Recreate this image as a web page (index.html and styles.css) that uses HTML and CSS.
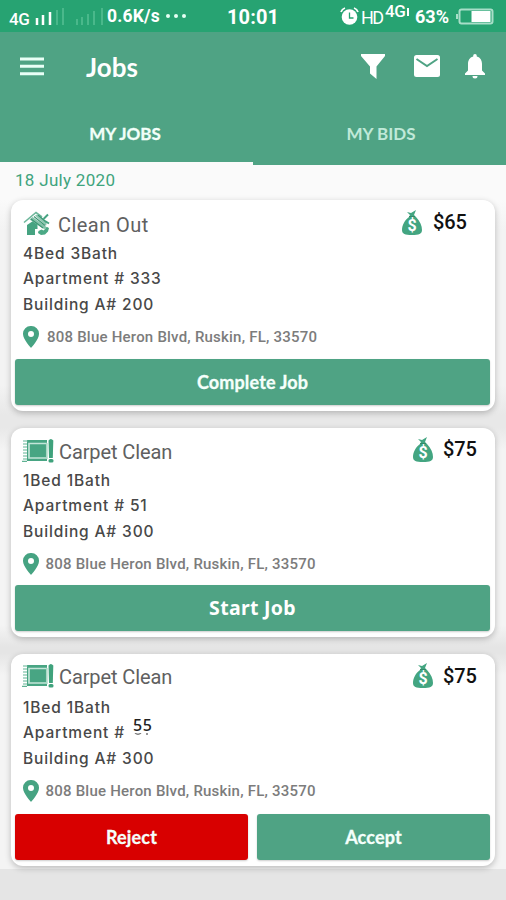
FILE: index.html
```html
<!DOCTYPE html>
<html lang="en">
<head>
<meta charset="utf-8">
<title>Jobs</title>
<link rel="stylesheet" href="styles.css">
</head>
<body>
<svg width="0" height="0" class="defs">
  <symbol id="bag" viewBox="0 0 22 27">
    <path fill="#43a581" d="M6 3l4 1 5-3-2 5 2 2c4 4 6 9 6 13 0 4-3 5-10 5S1 25 1 21C1 16 4 11 8 8l1-2z"/>
    <path stroke="#348a69" d="M8 7.500h6"/>
  </symbol>
  <symbol id="pin" viewBox="0 0 16 22">
    <path fill="#46a382" fill-rule="evenodd" d="M8 0a7.800 7.800 0 0 0-8 8c0 5.400 8 14 8 14s8-8.600 8-14a7.800 7.800 0 0 0-8-8zm0 5a3 3 0 1 1 0 6 3 3 0 0 1 0-6z"/>
  </symbol>
  <symbol id="carpet" viewBox="0 0 32 24">
    <path d="M5 1h20v21H5z" fill="#48a583"/>
    <path d="M25 4.500H7v14.500H25" fill="none" stroke="#c4e5d9" stroke-width="1.700"/>
    <path d="M24.800 4v16" stroke="#a9d8c5" stroke-width="1.700"/>
    <path d="M26.500 1.500q2.300-3 4.800 0l-.5 17.500h-3.800z" fill="#3fa27c"/><rect x="26.500" y="20" width="5" height="3.500" rx="1.500" fill="#3fa27c"/>
    <path d="M1 2h5M1 5h4M1 8h4M1 11h4M1 14h4M1 17h4M1 20h4M0 22.300h5" stroke="#60b393" stroke-width="1.200"/>
  </symbol>
</svg>

<header>
  <div class="status">
    <span class="net">4G</span>
    <svg class="signal" width="62" height="18" viewBox="0 0 62 18">
      <path d="M1 10v7M7 7v10M14 4v13" stroke="#fff" stroke-width="2.500"/>
      <path d="M21 2v15M27 0v17M41 11v6M46 9v8M52 6v11M58 3v14M66 0v17" stroke="#4ab88b" stroke-width="2"/>
    </svg>
    <span class="rate">0.6K/s</span>
    <span class="more"><i></i><i></i><i></i></span>
    <span class="clock">10:01</span>
    <svg class="alarm" width="19" height="19" viewBox="0 0 19 19">
      <circle cx="9.500" cy="10" r="7.800" fill="#fff"/>
      <path d="M1 5q1-3 4-4M18 5q-1-3-4-4" fill="none" stroke="#fff" stroke-width="1.800"/>
      <path d="M9.500 5.500V11h4" fill="none" stroke="#27a372" stroke-width="1.300"/>
    </svg>
    <span class="hd">HD</span>
    <span class="net2">4G<i></i></span>
    <span class="percent">63%</span>
    <svg class="battery" width="38" height="17" viewBox="0 0 38 17">
      <rect x="3.500" y="1.500" width="33" height="14" rx="2" fill="none" stroke="#a8dec8" stroke-width="2"/>
      <path d="M0 6h2v5H0z" fill="#a8dec8"/>
      <path d="M15.500 3h19v11h-19z" fill="#fff"/>
    </svg>
  </div>
  <div class="bar">
    <svg class="burger" width="24" height="19" viewBox="0 0 24 19"><path d="M0 2h24M0 9.300h24M0 16.700h24" stroke="#e9fff6" stroke-width="3"/></svg>
    <h1>Jobs</h1>
    <svg class="filter" width="24" height="25" viewBox="0 0 24 25"><path d="M0 0h24v2l-8.500 10.500V25L9 19.500v-7L0 2z" fill="#fff"/></svg>
    <svg class="mail" width="26" height="22" viewBox="0 0 26 22"><rect width="26" height="22" rx="2.500" fill="#fff"/><path d="M2.500 4L13 11 23.500 4" fill="none" stroke="#4fa384" stroke-width="2"/></svg>
    <svg class="bell" width="20" height="25" viewBox="0 0 20 25"><path d="M10 0c1.200 0 1.800.8 1.800 2.400C15.500 3.300 17 6.500 17 10v6.500l3 3V21H0v-1.500l3-3V10c0-3.500 1.500-6.700 5.200-7.600C8.200.8 8.800 0 10 0zM7.500 22h5a2.500 2.500 0 0 1-5 0z" fill="#fff"/></svg>
  </div>
  <nav>
    <a class="tab active"><span class="tab-jobs">MY JOBS</span></a>
    <a class="tab"><span class="tab-bids">MY BIDS</span></a>
  </nav>
</header>

<main>
  <p class="date">18 July 2020</p>

  <article class="card first">
    <div class="title">
      <svg class="house" width="27" height="25" viewBox="0 0 27 25">
        <path d="M1 11.500L13 1.500 19 6" fill="none" stroke="#6db79b" stroke-width="1.600"/>
        <path d="M4 14l6-4 4.500 3.500V18H12v6H4z" fill="#46a381"/>
        <path d="M6.500 8.500l3-2.500L25 17l-4 1z" fill="#84c1aa"/>
        <path d="M12 4.500L15 3l9 8-1 4z" fill="#8fc8b2"/>
        <path d="M8 8l12 9M11 5.500l11 9M15 4l8 7" stroke="#3b9673" stroke-width="1.100"/>
        <path d="M20.500 8L25 3.500M22 10l4 2.500" stroke="#46a381" stroke-width="2"/>
        <path d="M15.500 20l3-1.500 2 1L24 16l2 1-1 3.500-3 3-4 .5-3-2z" fill="#4ba985"/>
      </svg>
      <h2 class="clean">Clean Out</h2>
      <span class="bag"><svg width="22" height="27"><use href="#bag"/></svg><b>$</b></span>
      <span class="price">$65</span>
    </div>
    <ul>
      <li>4Bed 3Bath</li>
      <li>Apartment # 333</li>
      <li>Building A# 200</li>
    </ul>
    <p class="address"><svg width="16" height="22"><use href="#pin"/></svg><span>808 Blue Heron Blvd, Ruskin, FL, 33570</span></p>
    <div class="actions"><button class="complete">Complete Job</button></div>
  </article>

  <article class="card second">
    <div class="title">
      <svg class="carpet" width="32" height="24"><use href="#carpet"/></svg>
      <h2>Carpet Clean</h2>
      <span class="bag"><svg width="22" height="27"><use href="#bag"/></svg><b>$</b></span>
      <span class="price">$75</span>
    </div>
    <ul>
      <li>1Bed 1Bath</li>
      <li>Apartment # 51</li>
      <li>Building A# 300</li>
    </ul>
    <p class="address"><svg width="16" height="22"><use href="#pin"/></svg><span>808 Blue Heron Blvd, Ruskin, FL, 33570</span></p>
    <div class="actions"><button class="start">Start Job</button></div>
  </article>

  <article class="card third">
    <div class="title">
      <svg class="carpet" width="32" height="24"><use href="#carpet"/></svg>
      <h2>Carpet Clean</h2>
      <span class="bag"><svg width="22" height="27"><use href="#bag"/></svg><b>$</b></span>
      <span class="price">$75</span>
    </div>
    <ul>
      <li>1Bed 1Bath</li>
      <li>Apartment # <b class="unit">55<svg width="16" height="3" viewBox="0 0 16 3"><path d="M1 0q3 2.500 6 0M12 1h2" fill="none" stroke="#777" stroke-width="1.300"/></svg></b></li>
      <li>Building A# 300</li>
    </ul>
    <p class="address"><svg width="16" height="22"><use href="#pin"/></svg><span>808 Blue Heron Blvd, Ruskin, FL, 33570</span></p>
    <div class="actions"><button class="reject">Reject</button><button class="accept">Accept</button></div>
  </article>
</main>
</body>
</html>
```
FILE: styles.css
```css
* { box-sizing: border-box; }
body { margin: 0; width: 506px; height: 900px; overflow: hidden; background: #e5e5e5; font-family: Roboto, sans-serif; }
h1, h2, p, ul { margin: 0; padding: 0; font-weight: 400; }
svg { display: block; flex: none; }
.defs { position: absolute; }
header { height: 165px; background: #4fa384; color: #fff; }

.status { height: 32px; background: #27a372; display: flex; align-items: center; padding-left: 9px; white-space: nowrap; }
.status > * { flex: none; }
.net { width: 24px; font-size: 17px; font-weight: 500; letter-spacing: -.5px; padding-top: 5px; }
.signal { width: 68px; overflow: visible; margin-top: 1px; }
.rate { width: 58px; margin-left: 6px; font-size: 17.500px; font-weight: 700; letter-spacing: .2px; }
.more { display: flex; gap: 4px; width: 62px; padding-left: 1px; }
.more i { width: 4px; height: 4px; border-radius: 2px; background: #e5fff4; }
.clock { width: 112px; font-size: 20px; font-weight: 700; letter-spacing: .1px; padding-top: 2px; }
.alarm { margin-left: 1px; }
.hd { width: 22px; margin-left: 2px; font-size: 18px; letter-spacing: -1.500px; padding-top: 2px; }
.net2 { width: 30px; margin-left: 2px; font-size: 17px; font-weight: 500; letter-spacing: -.5px; padding-bottom: 11px; display: flex; align-items: center; }
.net2 i { width: 2px; height: 8px; background: #fff; margin: 3px 0 0 2px; }
.percent { width: 41px; font-size: 18px; font-weight: 700; }

.bar { height: 68px; display: flex; align-items: center; padding-left: 20px; }
.burger { margin-right: 42px; }
h1 { width: 275px; font: 700 26px Lato, sans-serif; padding-top: 1px; }
.filter { margin-right: 29px; }
.mail { margin-right: 25px; margin-left: -.500px; }
nav { display: flex; height: 65px; }
.tab { width: 253px; display: flex; align-items: center; justify-content: center; font: 700 17px Lato, sans-serif; color: #c0e9d9; padding-top: 5px; border-bottom: 3px solid transparent; }
.tab.active { color: #f2fff9; border-color: #fafafa; }
.tab-bids { margin-left: 3px; }
.tab-jobs { margin-right: 3px; -webkit-text-stroke: .3px; }

main { height: 704px; padding: 0 11px; background: linear-gradient(#fafafa 0 35px, #f3f3f3 65px 220px, #e8e8e8 250px 262px, #f4f4f4 285px 460px, #e5e5e5 482px 488px, #f4f4f4 510px); }
.date { height: 35px; padding: 0 0 4px 4px; font-size: 17px; line-height: 31px; letter-spacing: .3px; color: #3fa47d; }
.card { height: 211px; padding: 12px 5px 0 4px; background: #fff; border-radius: 12px; box-shadow: 0 2px 6px rgba(0,0,0,.24); }
.second { height: 209px; margin-top: 17px; padding-top: 11px; }
.third { height: 212px; margin-top: 17px; padding-top: 10px; }
.title { height: 26px; display: flex; align-items: center; }
.house { margin: -4px 8px 0 8px; }
.carpet { margin: -2px 5px 0 7px; }
h2 { width: 353px; font-size: 20px; color: #606060; letter-spacing: -.1px; white-space: nowrap; }
.clean { width: 343px; letter-spacing: .45px; }
.bag { display: grid; width: 22px; height: 27px; margin-top: -5px; }
.bag svg, .bag b { grid-area: 1 / 1; }
.bag b { color: #fff; text-align: center; font: 700 16px/19px Roboto, sans-serif; padding-top: 7px; }
.price { margin: -6px 0 0 10px; font-size: 20px; font-weight: 500; letter-spacing: -.1px; color: #111; }
.second .price, .third .price { margin-left: 9px; }
.third .price, .third .bag { margin-top: -3px; }
ul { list-style: none; padding: 2.500px 0 0 8px; font: 500 15.500px/25.700px Inter, sans-serif; letter-spacing: .85px; color: #484848; }
li { height: 25.700px; white-space: nowrap; }
.third ul { padding-top: 4.500px; }
.unit { position: relative; left: 3px; top: -7px; font: 500 16px/20px "Noto Sans", sans-serif; letter-spacing: .7px; color: #222; }
.unit svg { position: absolute; left: 1px; top: 19px; }
.address { height: 40px; display: flex; align-items: center; padding-left: 8px; font-size: 15px; font-weight: 500; letter-spacing: .22px; color: #7c7c7c; white-space: nowrap; }
.first .address { height: 39px; }
.address span { margin-left: 8px; }
.second .address, .third .address { height: 39px; }
.second .address span, .third .address span { margin-left: 6.500px; }
.first .actions { margin-top: 2.500px; }
.second .actions { margin-top: 1.400px; }
.third .actions { margin-top: 3.500px; }
.actions { display: flex; gap: 9px; }
button { flex: 1; height: 46px; border: 0; border-radius: 3px; padding: 0; background: #4fa384; color: #f5fffb; font: 700 18px Lato, sans-serif; letter-spacing: .15px; -webkit-text-stroke: .3px; box-shadow: 0 1px 2px rgba(0,0,0,.2); }
.start { font: 700 19.500px "Noto Sans", sans-serif; letter-spacing: .3px; -webkit-text-stroke: 0; color: #fff; }
.reject { background: #d80000; }
```
